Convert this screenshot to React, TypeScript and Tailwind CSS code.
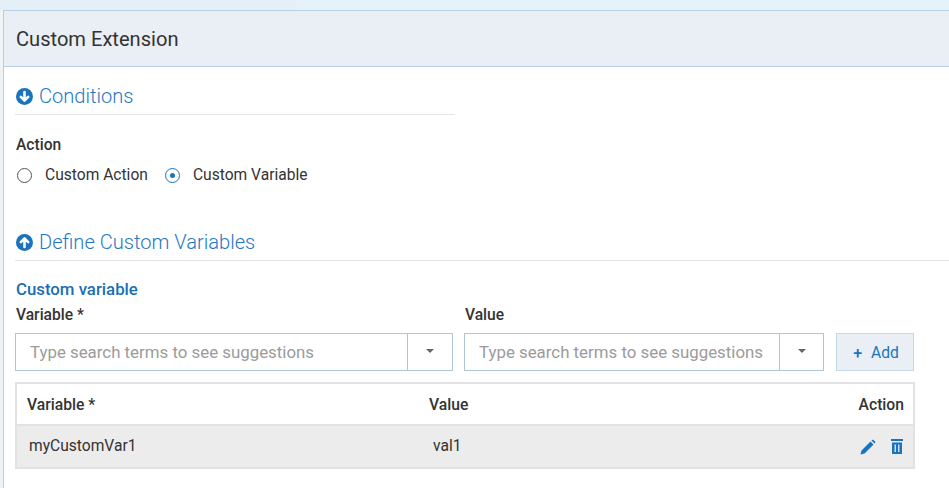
const FONT = "font-['Roboto',sans-serif]";

function SearchSelect({ width, caret }: { width: string; caret: string }) {
  return (
    <div className={`flex h-[38px] ${width} border border-[#b3c6d6] bg-white`}>
      <div className="flex-1 pl-[14px] text-[16.85px] leading-[36px] text-[#9b9b9b] whitespace-nowrap overflow-hidden">
        Type search terms to see suggestions
      </div>
      <div className={`flex ${caret} items-center justify-center border-l border-[#b3c6d6]`}>
        <span className="mb-[3px] h-0 w-0 border-x-[4.5px] border-t-[4.5px] border-x-transparent border-t-[#666]" />
      </div>
    </div>
  );
}

function SectionTitle({ up, title }: { up?: boolean; title: string }) {
  return (
    <div className="flex items-center gap-[6px] pl-[1px]">
      <svg width="17" height="17" viewBox="0 0 17 17" className="shrink-0">
        <circle cx="8.5" cy="8.5" r="8.5" fill="#1a73bd" />
        <path
          d={up ? "M8.5 13V4.5M4.8 8.2 8.5 4.5 12.2 8.2" : "M8.5 4V12.5M4.8 8.8 8.5 12.5 12.2 8.8"}
          fill="none"
          stroke="#fff"
          strokeWidth="2.6"
          strokeLinecap="round"
          strokeLinejoin="round"
        />
      </svg>
      <span className="text-[20.1px] font-light leading-[28px] text-[#1f78c4]">{title}</span>
    </div>
  );
}

function Radio({ checked, label }: { checked?: boolean; label: string }) {
  return (
    <div className="flex items-center">
      <span
        className={`flex h-[15px] w-[15px] items-center justify-center rounded-full border ${
          checked ? "border-[#1a73bd]" : "border-[#555]"
        }`}
      >
        {checked && <span className="h-[5px] w-[5px] rounded-full bg-[#1a73bd]" />}
      </span>
      <span className="ml-[13px] text-[15.6px] leading-[20px] text-[#333]">{label}</span>
    </div>
  );
}

export default function App() {
  return (
    <div className={`${FONT} flex h-[488px] w-[949px] flex-col overflow-hidden bg-white`}>
      {/* strip of the page behind the dialog */}
      <div className="flex h-[10px] shrink-0">
        <div className="w-[296px] bg-[#e4eff7]" />
        <div className="flex-1 bg-[#e6f2fa]" />
      </div>

      <div className="flex min-h-0 flex-1">
        <div className="w-[3px] shrink-0 bg-[#f0f3f5]" />
        <div className="flex-1 border-l border-t border-[#b9d0e3] bg-white">
          <div className="flex h-[56px] items-center border-b border-[#b9d0e3] bg-[#e9eff4] pl-[12px]">
            <h1 className="text-[20.1px] font-normal leading-[28px] text-[#333]">Custom Extension</h1>
          </div>

          <div className="pl-[11px] pt-[15px]">
            <div className="w-[440px] border-b border-[#e4e4e4] pb-[4px]">
              <SectionTitle title="Conditions" />
            </div>

            <div className="mt-[20px] pl-[1px] text-[15.6px] font-medium leading-[20px] text-[#333]">Action</div>
            <div className="mt-[10px] flex gap-[17px] pl-[2px]">
              <Radio label="Custom Action" />
              <Radio checked label="Custom Variable" />
            </div>

            <div className="mt-[43px] border-b border-[#e4e4e4] pb-[4px]">
              <SectionTitle up title="Define Custom Variables" />
            </div>

            <div className="mt-[18px] pl-[1px] text-[16.8px] font-medium leading-[20px] text-[#1a6fb5]">Custom variable</div>
            <div className="mt-[6px] flex pl-[1px] text-[15.6px] font-medium leading-[20px] text-[#333]">
              <div className="w-[449px]">Variable *</div>
              <div>Value</div>
            </div>

            <div className="mt-[8px] flex items-stretch">
              <SearchSelect width="w-[438px]" caret="w-[45px]" />
              <div className="ml-[11px]">
                <SearchSelect width="w-[360px]" caret="w-[44px]" />
              </div>
              <button className="ml-[12px] flex w-[78px] items-center justify-center border border-[#c3d9e8] bg-[#e9eff4] pl-[2px] pt-[3px] text-[15.6px] text-[#1a73bd]">
                <span className="mr-[9px] text-[16px] font-medium">+</span>Add
              </button>
            </div>

            <div className="mt-[11px] w-[900px] border-2 border-[#e2e2e2]">
              <div className="flex h-[40px] items-center pt-[1px] text-[15.7px] font-medium text-[#333]">
                <div className="w-[412px] pl-[10px]">Variable *</div>
                <div className="flex-1">Value</div>
                <div className="pr-[9px]">Action</div>
              </div>
              <div className="flex h-[43px] items-center border-t-2 border-[#e2e2e2] bg-[#ececec] text-[15.6px] text-[#333]">
                <div className="w-[412px] pl-[12px]">myCustomVar1</div>
                <div className="flex-1 pl-[4px]">val1</div>
                <div className="flex items-center gap-[15px] pr-[10px]">
                  <svg width="16" height="16" viewBox="0 0 16 16">
                    <path d="M0.5 15.5 1.5 11.5 10.5 2.5 13.5 5.5 4.5 14.5Z M11.5 1.5 13 0.5 15.5 3 14.5 4.5Z" fill="#1a73bd" />
                  </svg>
                  <svg width="12" height="15" viewBox="0 0 12 15">
                    <path d="M0 0H12V2H0Z M1 3.5H11V15H1Z" fill="#1a73bd" />
                    <path d="M3.5 5.5H5V13H3.5Z M7 5.5H8.5V13H7Z" fill="#cfe0ee" />
                  </svg>
                </div>
              </div>
            </div>
          </div>
        </div>
      </div>
    </div>
  );
}
